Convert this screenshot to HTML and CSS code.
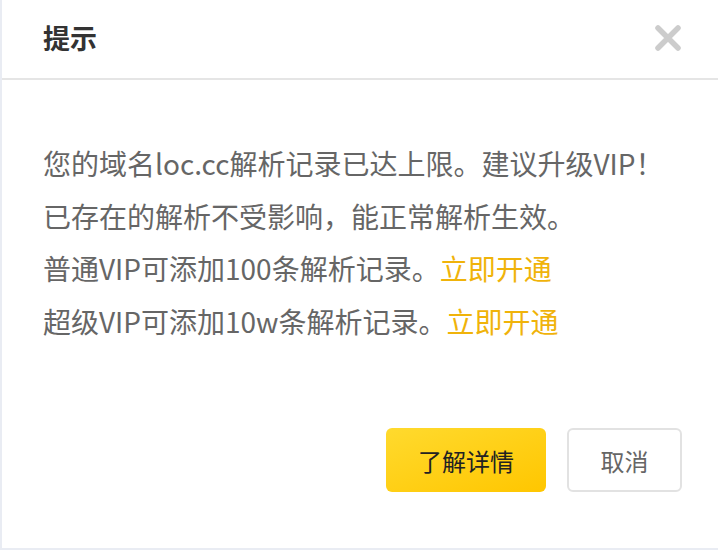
FILE: index.html
```html
<!DOCTYPE html>
<html lang="zh-CN">
<head>
<meta charset="utf-8">
<title>提示</title>
<link rel="stylesheet" href="styles.css">
</head>
<body>
<div class="dialog">
  <div class="header">
    <h1 class="title">提示</h1>
    <button class="close" aria-label="关闭">
      <svg width="28" height="28" viewBox="0 0 28 28"><path d="M4 4L24 24M24 4L4 24" stroke="#cccccc" stroke-width="5.5" stroke-linecap="round" fill="none"/></svg>
    </button>
  </div>
  <div class="body">
    <p class="line">您的域名loc.cc解析记录已达上限。建议升级VIP！</p>
    <p class="line">已存在的解析不受影响，能正常解析生效。</p>
    <p class="line">普通VIP可添加100条解析记录。<a class="link" href="#">立即开通</a></p>
    <p class="line">超级VIP可添加10w条解析记录。<a class="link" href="#">立即开通</a></p>
  </div>
  <div class="footer">
    <button class="btn btn-primary">了解详情</button>
    <button class="btn btn-default">取消</button>
  </div>
</div>
</body>
</html>
```
FILE: styles.css
```css
* { box-sizing: border-box; }
html, body {
  margin: 0;
  padding: 0;
  width: 718px;
  height: 550px;
  overflow: hidden;
  background: #e9ecf3;
  font-family: "Noto Sans CJK SC", "Noto Sans", sans-serif;
}
.dialog {
  margin-left: 2px;
  width: 716px;
  height: 548px;
  background: #ffffff;
  display: flex;
  flex-direction: column;
}
.header {
  height: 80px;
  border-bottom: 2px solid #e5e5e5;
  display: flex;
  align-items: center;
  justify-content: space-between;
  padding: 0 36px 3px 41px;
}
.title {
  margin: 0;
  font-size: 27px;
  font-weight: 700;
  color: #333333;
  line-height: 1;
}
.close {
  border: 0;
  background: none;
  padding: 0;
  width: 28px;
  height: 28px;
  display: flex;
  cursor: pointer;
  filter: blur(0.4px);
}
.body {
  padding: 57px 20px 0 41px;
}
.line {
  margin: 0;
  font-size: 28px;
  line-height: 52.5px;
  color: #666666;
  white-space: nowrap;
}
.link {
  color: #f0b30a;
  text-decoration: none;
}
.footer {
  margin-top: 81px;
  display: flex;
  justify-content: flex-end;
  gap: 21px;
  padding-right: 36px;
}
.btn {
  height: 64px;
  border-radius: 6px;
  font-family: "Noto Sans CJK SC", "Noto Sans", sans-serif;
  font-size: 24px;
  cursor: pointer;
  padding: 0;
}
.btn-primary {
  width: 160px;
  border: 0;
  background: linear-gradient(160deg, #ffda2e 0%, #ffc600 100%);
  color: #222222;
}
.btn-default {
  width: 115px;
  border: 2px solid #e2e2e2;
  background: #ffffff;
  color: #666666;
}
```
